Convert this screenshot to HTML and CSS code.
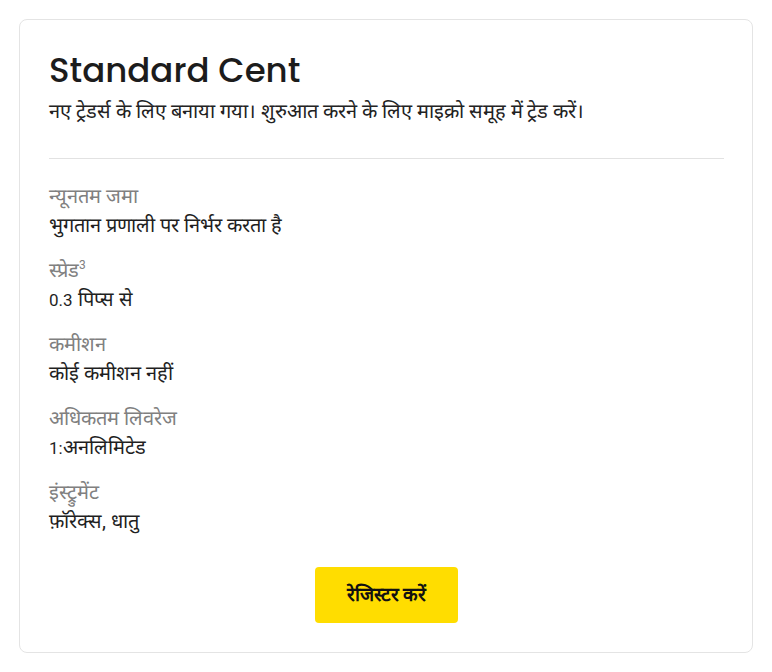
FILE: index.html
```html
<!DOCTYPE html>
<html>
  <head>
    <meta charset="utf-8">
    <title>Standard Cent</title>
    <link rel="stylesheet" href="styles.css">
  </head>
  <body>
    <div class="card">
      <h1 class="card-title">Standard Cent</h1>
      <p class="card-desc">नए ट्रेडर्स के लिए बनाया गया। शुरुआत करने के लिए माइक्रो समूह में ट्रेड करें।</p>

      <hr class="divider">

      <dl class="specs">
        <div class="spec">
          <dt>न्यूनतम जमा</dt>
          <dd>भुगतान प्रणाली पर निर्भर करता है</dd>
        </div>
        <div class="spec">
          <dt>स्प्रेड<sup>3</sup></dt>
          <dd><span class="num">0.3</span> पिप्स से</dd>
        </div>
        <div class="spec">
          <dt>कमीशन</dt>
          <dd>कोई कमीशन नहीं</dd>
        </div>
        <div class="spec">
          <dt>अधिकतम लिवरेज</dt>
          <dd><span class="num">1:</span>अनलिमिटेड</dd>
        </div>
        <div class="spec">
          <dt>इंस्ट्रुमेंट</dt>
          <dd>फ़ॉरेक्स, धातु</dd>
        </div>
      </dl>

      <div class="actions">
        <a class="btn" href="#">रेजिस्टर करें</a>
      </div>
    </div>
  </body>
</html>
```

FILE: styles.css
```css
body {
  margin: 0;
  background: #fff;
  font-family: Roboto, sans-serif;
  color: #1f1f1f;
}

.card {
  box-sizing: border-box;
  width: 734px;
  margin: 19px 0 0 19px;
  padding: 29px 28px 29px 29px;
  border: 1px solid #e4e4e4;
  border-radius: 8px;
}

.card-title {
  margin: 0;
  font-family: Poppins, Lato, sans-serif;
  font-size: 34px;
  font-weight: 500;
  line-height: 42px;
  color: #1c1c1c;
}

.card-desc {
  height: 26px;
  margin: 7px 0 0;
  font-size: 20px;
  line-height: 26px;
  color: #222;
}

.divider {
  margin: 34px 0 24px;
  border: none;
  border-top: 1px solid #e2e2e2;
}

.specs {
  margin: 0;
}

.spec {
  margin-bottom: 19px;
}

.spec:last-child {
  margin-bottom: 0;
}

.spec dt,
.spec dd {
  height: 26px;
  font-size: 20px;
  line-height: 26px;
}

.spec dt {
  color: #808080;
}

.spec dt sup {
  font-size: 12px;
  line-height: 0;
}

.spec dd {
  margin: 3px 0 0;
  color: #1f1f1f;
}

.num {
  font-size: 17px;
}

.actions {
  display: flex;
  justify-content: center;
  margin-top: 33px;
}

.btn {
  display: inline-block;
  padding: 14px 32px;
  background: #ffdd00;
  border-radius: 4px;
  color: #111;
  font-size: 19px;
  font-weight: 700;
  line-height: 28px;
  text-decoration: none;
}
```
